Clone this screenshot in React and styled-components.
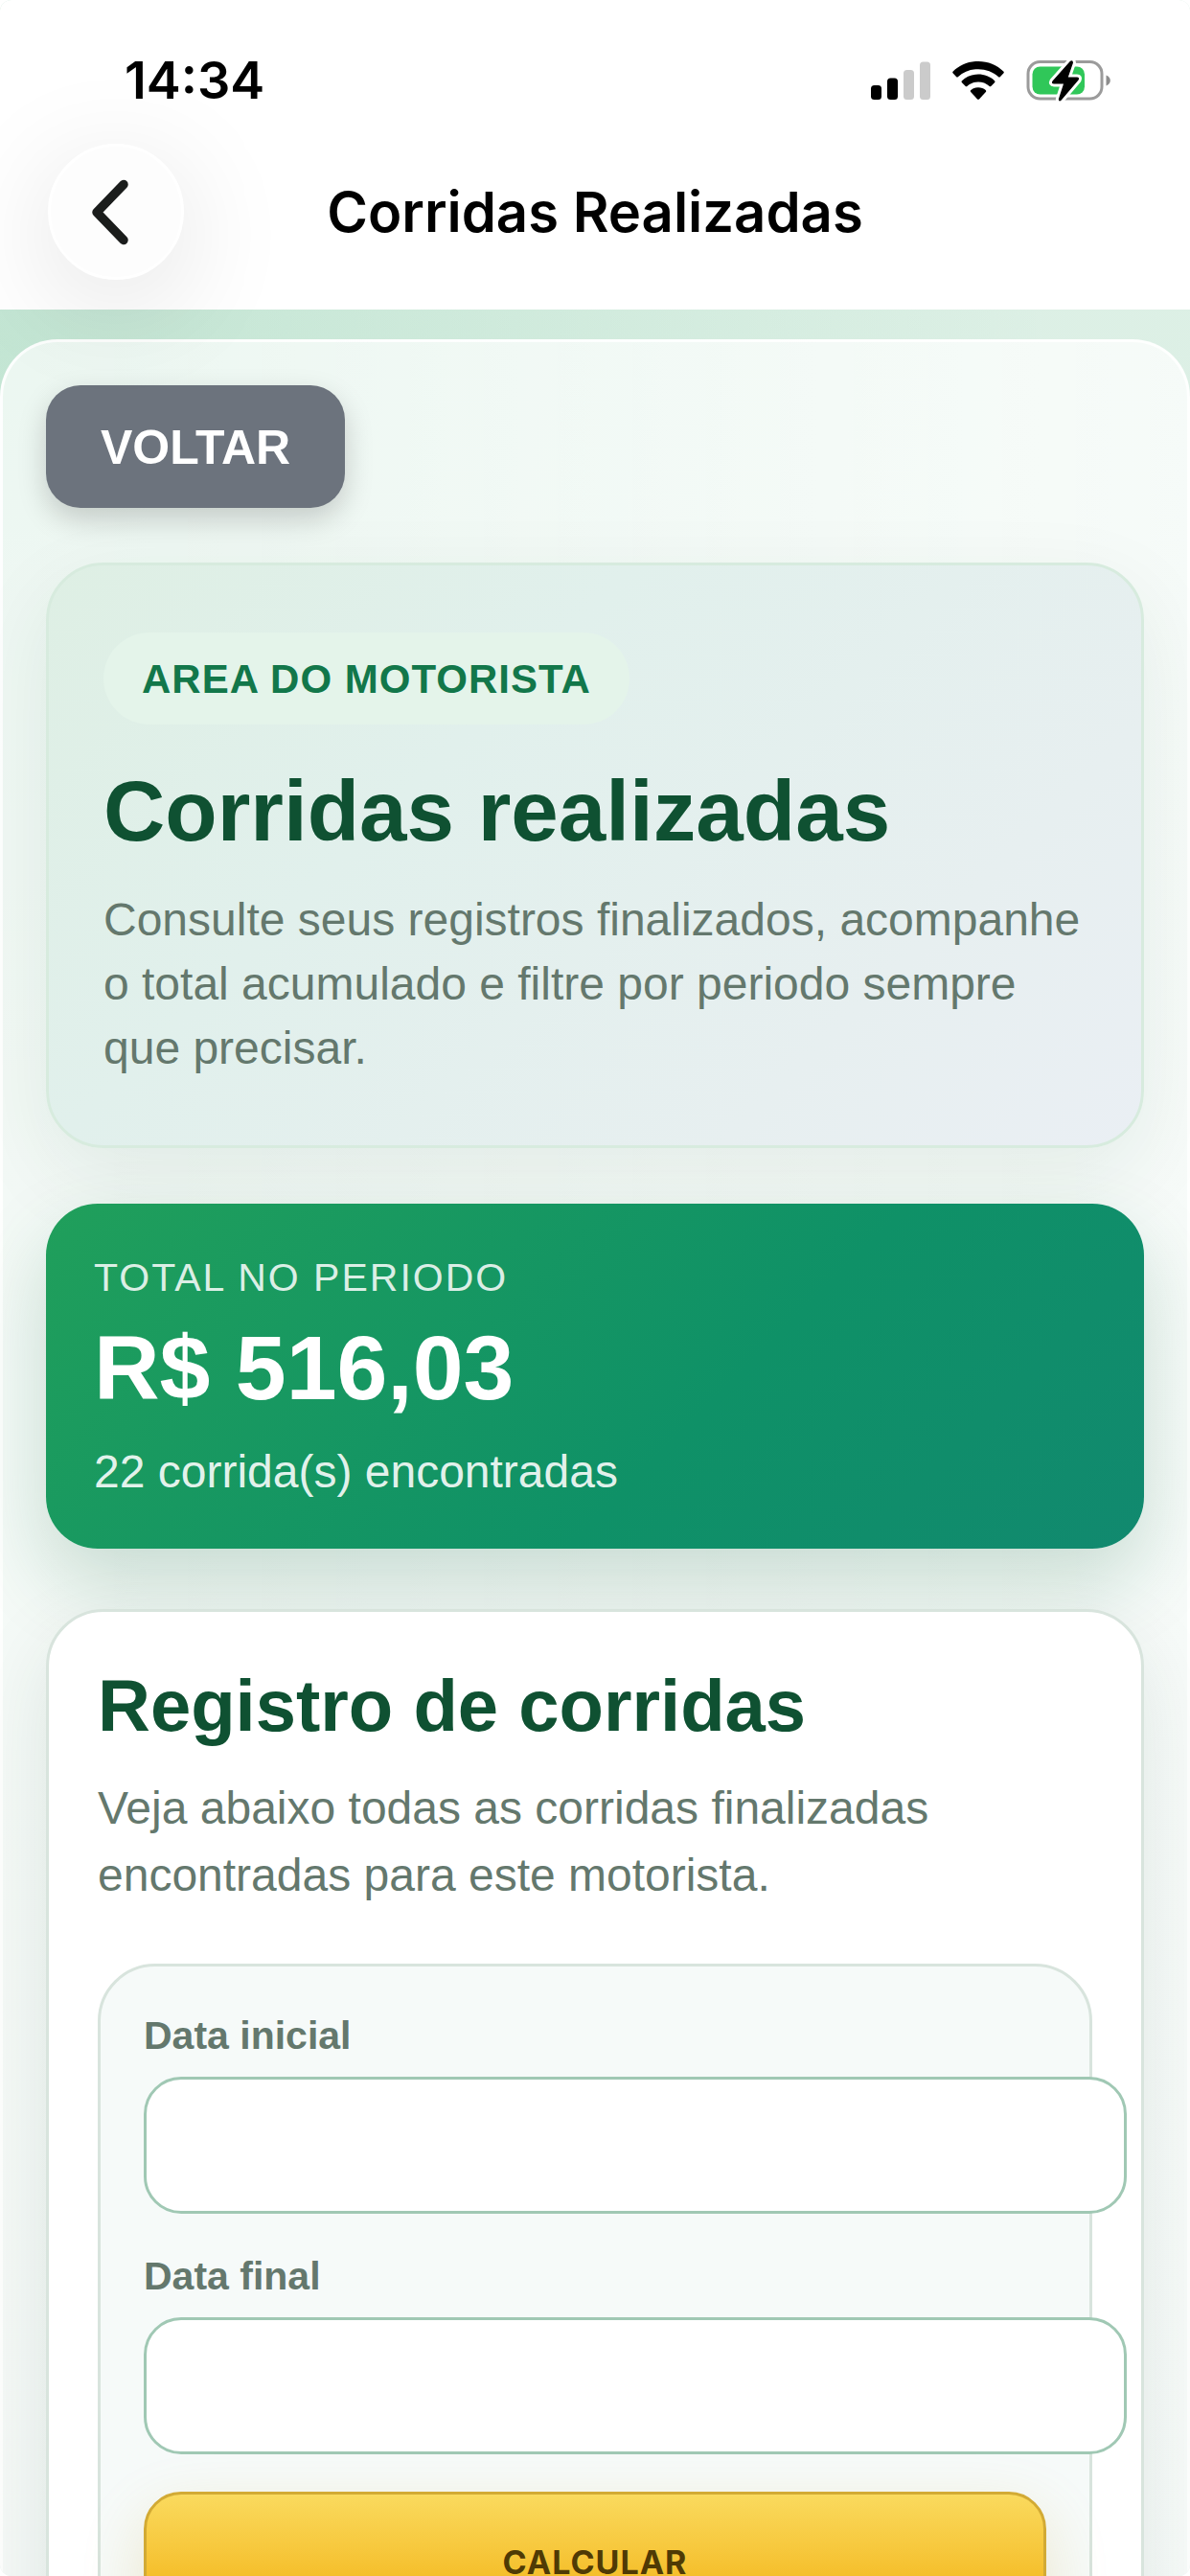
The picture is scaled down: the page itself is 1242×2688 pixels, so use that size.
import React from "react";
import styled, { createGlobalStyle } from "styled-components";

const sans = `"Liberation Sans", Arial, Helvetica, sans-serif`;
const system = `Inter, "Liberation Sans", sans-serif`;

const GlobalStyle = createGlobalStyle`
  html, body { margin: 0; background: #ffffff; }
  *, *::before, *::after { box-sizing: border-box; }
  h1, h2, p { margin: 0; }
`;

const Screen = styled.div`
  display: flex;
  flex-direction: column;
  height: 100vh;
  overflow: hidden;
  border-radius: 12px;
  background:
    radial-gradient(circle at 0 360px, rgba(24, 160, 90, 0.13), rgba(24, 160, 90, 0) 1100px),
    linear-gradient(180deg, #dcf0e5, #e0ede7);
  font-family: ${sans};
`;

const TopBar = styled.header`
  position: relative;
  z-index: 1;
  flex: none;
  height: 323px;
  background: #ffffff;
  font-family: ${system};
  color: #000000;
`;

const StatusBar = styled.div`
  display: flex;
  align-items: center;
  justify-content: space-between;
  height: 150px;
  padding: 17px 83px 0 130px;
`;

const Clock = styled.time`
  font-size: 54px;
  font-weight: 600;
  line-height: 64px;
`;

const StatusIcons = styled.div`
  display: flex;
  align-items: center;
  gap: 23px;

  svg {
    overflow: visible;
  }
`;

const NavBar = styled.nav`
  display: grid;
  grid-template-columns: 142px 1fr 142px;
  align-items: center;
  padding: 0 50px;
`;

const BackButton = styled.button`
  display: flex;
  align-items: center;
  justify-content: center;
  width: 142px;
  height: 142px;
  padding: 0 12px 0 0;
  border: 3px solid #ffffff;
  border-radius: 50%;
  background: #fdfdfd;
  box-shadow: 0 24px 120px rgba(0, 20, 10, 0.12);
`;

const ScreenTitle = styled.h1`
  font-size: 58px;
  font-weight: 600;
  line-height: 72px;
  text-align: center;
`;

const Sheet = styled.main`
  flex: 1 0 auto;
  display: flex;
  flex-direction: column;
  align-items: stretch;
  margin-top: 31px;
  padding: 45px;
  border: 3px solid rgba(255, 255, 255, 0.85);
  border-radius: 60px 60px 0 0;
  background: linear-gradient(90deg, rgba(255, 255, 255, 0.68), rgba(255, 255, 255, 0.74));
`;

const ReturnButton = styled.button`
  align-self: flex-start;
  height: 128px;
  padding: 2px 57px 0;
  border: 0;
  border-radius: 36px;
  background: #6c737d;
  box-shadow: 0 12px 30px rgba(0, 0, 0, 0.18);
  color: #ffffff;
  font: 700 50px/60px ${sans};
`;

const Hero = styled.section`
  margin-top: 57px;
  padding: 70px 57px 68px;
  border: 3px solid #d7ebde;
  border-radius: 60px;
  background: linear-gradient(135deg, #deefe4, #e1f0ec 35%, #e7eff0 75%, #eaeff4);
  box-shadow: 0 30px 90px rgba(15, 60, 40, 0.08);
`;

const Badge = styled.p`
  width: fit-content;
  padding: 25px 40px 23px;
  border-radius: 48px;
  background: #e4f4ea;
  color: #12774a;
  font-size: 42px;
  font-weight: 700;
  line-height: 48px;
  letter-spacing: 1px;
`;

const HeroTitle = styled.h2`
  margin-top: 38px;
  color: #0f5132;
  font-size: 89px;
  font-weight: 700;
  line-height: 104px;
`;

const Text = styled.p`
  margin-top: ${(p) => p.$gap}px;
  color: #64786d;
  font-size: 48px;
  line-height: ${(p) => p.$leading}px;
`;

const Summary = styled.section`
  margin-top: 58px;
  padding: 53px 50px 51px;
  border-radius: 54px;
  background: linear-gradient(135deg, #209f5b, #0f9167 60%, #11896f);
  box-shadow: 0 36px 84px rgba(15, 100, 60, 0.2);
  color: #ffffff;
`;

const SummaryLabel = styled.p`
  color: rgba(255, 255, 255, 0.85);
  font-size: 41px;
  line-height: 48px;
  letter-spacing: 2px;
`;

const SummaryValue = styled.p`
  margin-top: 15px;
  font-size: 95px;
  font-weight: 700;
  line-height: 110px;
`;

const SummaryNote = styled.p`
  margin-top: 25px;
  color: rgba(255, 255, 255, 0.9);
  font-size: 48px;
  line-height: 58px;
`;

const Records = styled.section`
  margin-top: 63px;
  padding: 51px;
  border: 3px solid #d8e4dd;
  border-radius: 60px;
  background: #ffffff;
  box-shadow: 0 30px 84px rgba(15, 50, 40, 0.1);
`;

const RecordsTitle = styled.h2`
  color: #0f5132;
  font-size: 76px;
  font-weight: 700;
  line-height: 94px;
`;

const Filters = styled.form`
  display: flex;
  flex-direction: column;
  margin-top: 57px;
  padding: 46px 45px 60px;
  border: 3px solid #d8e4dd;
  border-radius: 60px;
  background: #f6faf9;
`;

const Field = styled.div`
  display: flex;
  flex-direction: column;
  gap: 17px;
  margin-bottom: 39px;
`;

const FieldLabel = styled.label`
  color: #64786d;
  font-size: 41px;
  font-weight: 700;
  line-height: 52px;
`;

const FieldInput = styled.input`
  box-sizing: content-box;
  width: 100%;
  height: 137px;
  padding: 0 39px;
  border: 3px solid #a0c8b4;
  border-radius: 39px;
  background: #ffffff;
  color: #0f5132;
  font: 400 48px/58px ${sans};
`;

const CalculateButton = styled.button`
  height: 148px;
  border: 3px solid #d2aa34;
  border-radius: 39px;
  background: linear-gradient(180deg, #fada5e, #f5bf2c 60%, #f3b81f);
  box-shadow: 0 24px 66px rgba(200, 150, 20, 0.2);
  color: #4f3a05;
  font: 700 34px/42px ${system};
  letter-spacing: 1px;
`;

function SignalIcon() {
  return (
    <svg width="62" height="42" viewBox="0 0 62 42" aria-hidden="true">
      <rect x="0" y="26" width="11" height="15" rx="3.5" />
      <rect x="17" y="18.500" width="11" height="22.500" rx="3.5" />
      <rect x="34" y="10" width="11" height="31" rx="3.5" fill="#cbcbcb" />
      <rect x="51" y="1.500" width="11" height="39.500" rx="3.5" fill="#cbcbcb" />
    </svg>
  );
}

function WifiIcon() {
  return (
    <svg width="54" height="42" viewBox="0 0 54 42" aria-hidden="true">
      <path d="M27 1C16.700 1 7.500 5 0.700 11.500Q-0.300 12.500 0.700 13.600L4 17Q5 18 6.100 17C11.500 12 18.800 9.200 27 9.200S42.500 12 47.900 17Q49 18 50 17L53.300 13.600Q54.300 12.500 53.300 11.500C46.500 5 37.300 1 27 1Z" />
      <path d="M27 14.600C20.600 14.600 14.500 17 10 21.200Q9 22.200 10 23.200L13.500 26.700Q14.500 27.700 15.600 26.700C18.700 23.900 22.600 22.400 27 22.400S35.300 23.900 38.400 26.700Q39.500 27.700 40.500 26.700L44 23.200Q45 22.200 44 21.200C39.500 17 33.400 14.600 27 14.600Z" />
      <path d="M27 28.200C24 28.200 21.300 29.200 19.300 30.900Q18.300 31.900 19.200 32.900L25.800 40.200Q27 41.500 28.200 40.200L34.800 32.900Q35.700 31.900 34.700 30.900C32.700 29.200 30 28.200 27 28.200Z" />
    </svg>
  );
}

function BatteryIcon() {
  const bolt =
    "M46 1.800L27.500 22.500Q25.800 25.500 29 25.500H39L33.800 41.500Q34 44.500 36.500 42.800L54.600 21.500Q56 18.500 53 18.500H43.800L49 3.500Q48.800 0 46 1.800Z";
  return (
    <svg width="88" height="44" viewBox="0 0 88 44" aria-hidden="true">
      <rect x="2" y="2.500" width="77" height="38.500" rx="12.5" fill="none" stroke="#9b9b9b" strokeWidth="3" />
      <path d="M83.500 16.500C86.300 17.600 87.800 19.700 87.800 22S86.300 26.400 83.500 27.500Z" fill="#8d8d8d" />
      <rect x="6.500" y="7.500" width="54.500" height="29" rx="8" fill="#30c759" />
      <path d={bolt} stroke="#ffffff" strokeWidth="6" strokeLinejoin="round" />
      <path d={bolt} />
    </svg>
  );
}

function ChevronIcon() {
  return (
    <svg width="42" height="70" viewBox="0 0 42 70" fill="none" aria-hidden="true">
      <path
        d="M35 6.500L7 35.500L35 64.500"
        stroke="#1b1d1c"
        strokeWidth="9.500"
        strokeLinecap="round"
        strokeLinejoin="round"
      />
    </svg>
  );
}

function DateField({ id, label }) {
  return (
    <Field>
      <FieldLabel htmlFor={id}>{label}</FieldLabel>
      <FieldInput id={id} name={id} type="text" />
    </Field>
  );
}

export default function App() {
  return (
    <>
      <GlobalStyle />
      <Screen>
        <TopBar>
          <StatusBar>
            <Clock>14:34</Clock>
            <StatusIcons>
              <SignalIcon />
              <WifiIcon />
              <BatteryIcon />
            </StatusIcons>
          </StatusBar>
          <NavBar>
            <BackButton type="button" aria-label="Voltar">
              <ChevronIcon />
            </BackButton>
            <ScreenTitle>Corridas Realizadas</ScreenTitle>
          </NavBar>
        </TopBar>
        <Sheet>
          <ReturnButton type="button">VOLTAR</ReturnButton>
          <Hero>
            <Badge>AREA DO MOTORISTA</Badge>
            <HeroTitle>Corridas realizadas</HeroTitle>
            <Text $gap={28} $leading={67}>
              Consulte seus registros finalizados, acompanhe o total acumulado e filtre por periodo
              sempre que precisar.
            </Text>
          </Hero>
          <Summary>
            <SummaryLabel>TOTAL NO PERIODO</SummaryLabel>
            <SummaryValue>R$ 516,03</SummaryValue>
            <SummaryNote>22 corrida(s) encontradas</SummaryNote>
          </Summary>
          <Records>
            <RecordsTitle>Registro de corridas</RecordsTitle>
            <Text $gap={25} $leading={70}>
              Veja abaixo todas as corridas finalizadas encontradas para este motorista.
            </Text>
            <Filters>
              <DateField id="data-inicial" label="Data inicial" />
              <DateField id="data-final" label="Data final" />
              <CalculateButton type="button">CALCULAR</CalculateButton>
            </Filters>
          </Records>
        </Sheet>
      </Screen>
    </>
  );
}
